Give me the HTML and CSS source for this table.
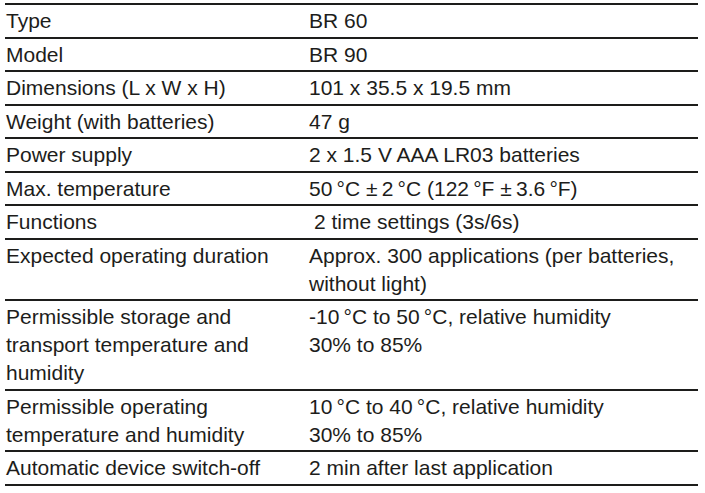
FILE: index.html
```html
<!DOCTYPE html>
<html lang="en">
<head>
<meta charset="utf-8">
<title>Technical data</title>
<link rel="stylesheet" href="styles.css">
</head>
<body>
<table class="spec">
  <tbody>
    <tr><td class="k">Type</td><td class="v">BR 60</td></tr>
    <tr><td class="k">Model</td><td class="v">BR 90</td></tr>
    <tr><td class="k">Dimensions (L x W x H)</td><td class="v">101 x 35.5 x 19.5 mm</td></tr>
    <tr><td class="k">Weight (with batteries)</td><td class="v">47 g</td></tr>
    <tr><td class="k">Power supply</td><td class="v">2 x 1.5 V AAA LR03 batteries</td></tr>
    <tr><td class="k">Max. temperature</td><td class="v">50&#8201;°C ±&#8201;2&#8201;°C (122&#8201;°F ±&#8201;3.6&#8201;°F)</td></tr>
    <tr><td class="k">Functions</td><td class="v"><span class="indent">2 time settings (3s/6s)</span></td></tr>
    <tr><td class="k">Expected operating duration</td><td class="v">Approx. 300 applications (per batteries,<br>without light)</td></tr>
    <tr><td class="k">Permissible storage and<br>transport temperature and<br>humidity</td><td class="v">-10&#8201;°C to 50&#8201;°C, relative humidity<br>30% to 85%</td></tr>
    <tr><td class="k">Permissible operating<br>temperature and humidity</td><td class="v">10&#8201;°C to 40&#8201;°C, relative humidity<br>30% to 85%</td></tr>
    <tr><td class="k">Automatic device switch-off</td><td class="v">2 min after last application</td></tr>
  </tbody>
</table>
</body>
</html>
```
FILE: styles.css
```css
html, body {
  margin: 0;
  padding: 0;
  background: #ffffff;
}
body {
  padding: 3px 0 0 5px;
  font-family: "Liberation Sans", Arial, Helvetica, sans-serif;
  font-size: 21px;
  line-height: 28px;
  color: #1d1d1b;
}
.spec {
  border-collapse: collapse;
  width: 693px;
  table-layout: fixed;
}
.spec td {
  border-top: 2px solid #1d1d1b;
  padding: 2px 0 1.5px 0;
  vertical-align: top;
  white-space: nowrap;
}
.spec tr:last-child td {
  border-bottom: 2px solid #1d1d1b;
}
.spec .k {
  width: 303px;
  padding-left: 1px;
}
.spec .v {
  padding-left: 0;
}
.indent {
  padding-left: 5px;
}
```
